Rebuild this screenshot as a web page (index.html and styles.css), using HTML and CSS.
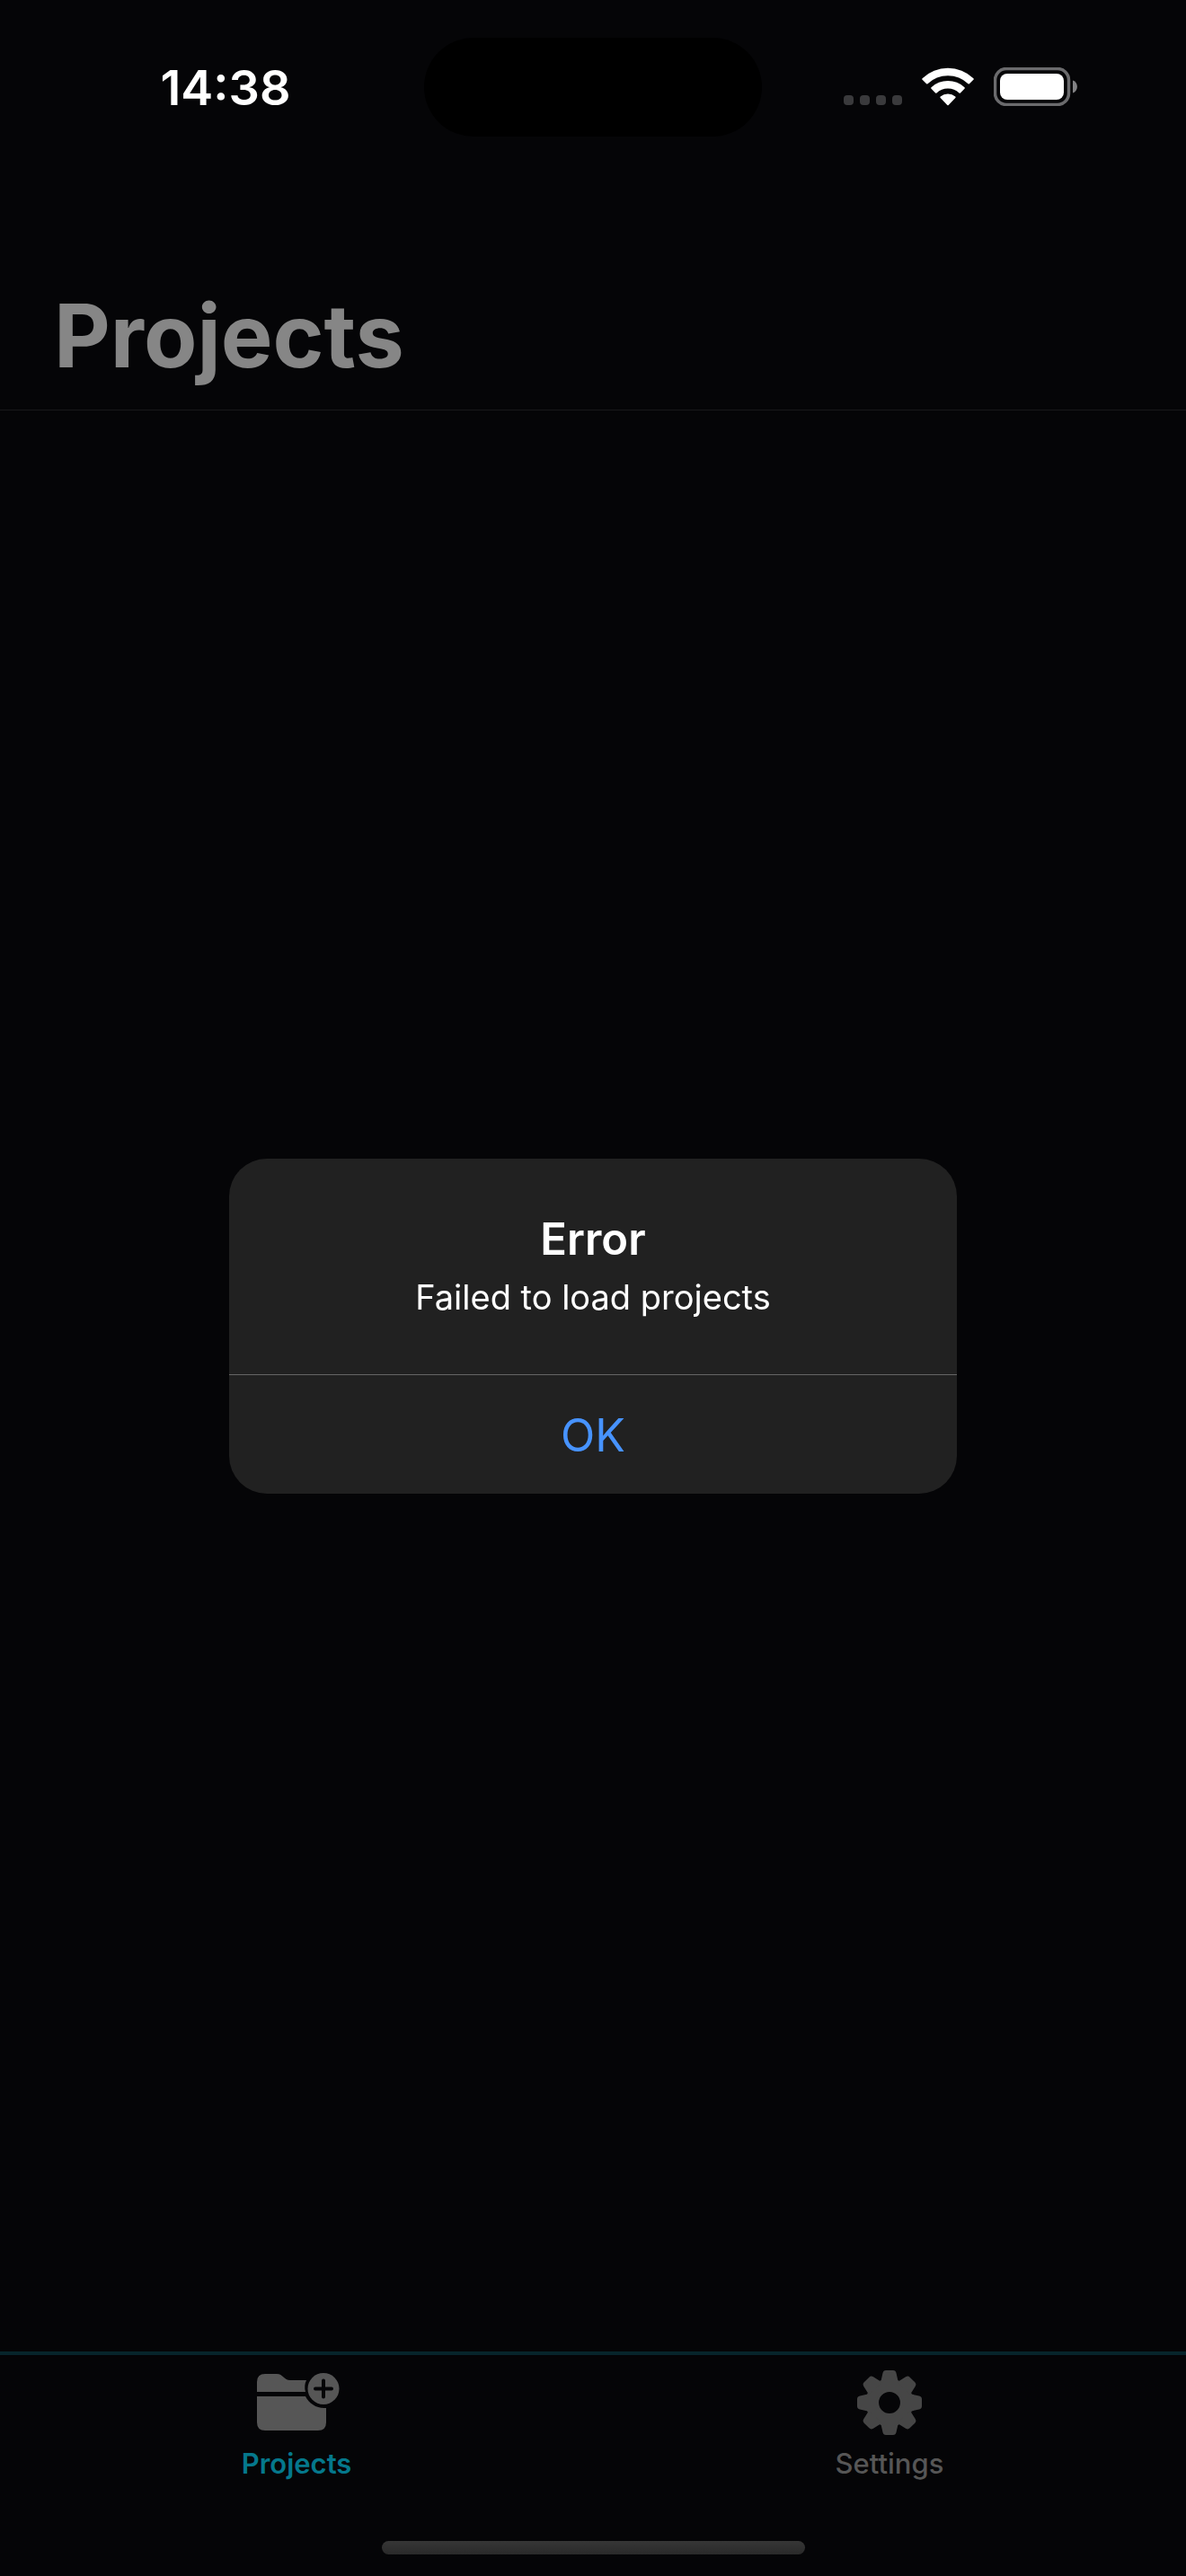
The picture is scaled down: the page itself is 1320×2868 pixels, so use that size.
FILE: index.html
```html
<!DOCTYPE html>
<html lang="en">
<head>
  <meta charset="utf-8">
  <meta name="viewport" content="width=device-width, initial-scale=1">
  <title>Projects</title>
  <link rel="stylesheet" href="styles.css">
</head>
<body>
  <div class="screen">
    <div class="status-bar">
      <time class="status-time">14:38</time>
      <span class="island"></span>
      <div class="status-icons">
        <svg class="icon-signal" viewBox="0 0 65 12" aria-hidden="true">
          <rect width="11" height="11" rx="4"/>
          <rect x="18" width="11" height="11" rx="4"/>
          <rect x="36" width="11" height="11" rx="4"/>
          <rect x="54" width="11" height="11" rx="4"/>
        </svg>
        <svg class="icon-wifi" viewBox="0 0 58 43" aria-hidden="true">
          <path d="M.6 12.2a1 1 0 0 0 0 1.500l4.500 4.500a1 1 0 0 0 1.400 0a32.500 32.500 0 0 1 45 0a1 1 0 0 0 1.400 0l4.500-4.500a1 1 0 0 0 0-1.500a41.200 41.200 0 0 0-56.800 0z"/>
          <path d="M10.500 22.300a1 1 0 0 0 0 1.500l4.600 4.600a1 1 0 0 0 1.400 0a18.500 18.500 0 0 1 25 0a1 1 0 0 0 1.400 0l4.600-4.600a1 1 0 0 0 0-1.500a27 27 0 0 0-37 0z"/>
          <path d="M20.700 32.600a1 1 0 0 0 0 1.500l7.600 7.900a1 1 0 0 0 1.400 0l7.600-7.900a1 1 0 0 0 0-1.500a13 13 0 0 0-16.600 0z"/>
        </svg>
        <svg class="icon-battery" viewBox="0 0 93 43" aria-hidden="true">
          <rect x="1.500" y="1.500" width="82" height="40" rx="12.500" fill="none" stroke="#6b6b6d" stroke-width="3.500"/>
          <rect x="7" y="7" width="71" height="29" rx="8" fill="#fff"/>
          <path d="M88 14.500c6.500 2 6.500 12 0 14z" fill="#828284"/>
        </svg>
      </div>
    </div>

    <header class="page-header">
      <h1 class="page-title">Projects</h1>
    </header>

    <main class="content"></main>

    <nav class="tab-bar">
      <div class="tabs">
        <a class="tab tab-active" href="#projects">
          <svg class="tab-icon" viewBox="0 0 96 72" aria-hidden="true">
            <path d="M4 24V13q0-9 9-9h13c7 0 8 7 15 7h18q-3 6-1 13z"/>
            <path d="M4 29h54c4 8 13 14 23 13v16q0 9-9 9H13q-9 0-9-9z"/>
            <circle cx="78" cy="20.500" r="17.500"/>
            <path class="plus" d="M69 20.500h18M78 11.500v18"/>
          </svg>
          <span>Projects</span>
        </a>
        <a class="tab" href="#settings">
          <svg class="tab-icon" viewBox="-48 -36 96 72" aria-hidden="true">
            <defs>
              <path id="tooth" d="M-10-22-7.500-33q.6-3 3.500-3h8q2.900 0 3.500 3L10-22z"/>
            </defs>
            <circle r="19.200" fill="none" stroke="currentColor" stroke-width="14.500"/>
            <use href="#tooth"/>
            <use href="#tooth" transform="rotate(45)"/>
            <use href="#tooth" transform="rotate(90)"/>
            <use href="#tooth" transform="rotate(135)"/>
            <use href="#tooth" transform="rotate(180)"/>
            <use href="#tooth" transform="rotate(225)"/>
            <use href="#tooth" transform="rotate(270)"/>
            <use href="#tooth" transform="rotate(315)"/>
          </svg>
          <span>Settings</span>
        </a>
      </div>
      <span class="home-indicator"></span>
    </nav>
  </div>

  <div class="overlay">
    <section class="alert" role="alertdialog" aria-labelledby="alert-title" aria-describedby="alert-text">
      <div class="alert-body">
        <h2 class="alert-title" id="alert-title">Error</h2>
        <p class="alert-text" id="alert-text">Failed to load projects</p>
      </div>
      <button class="alert-button" type="button">OK</button>
    </section>
  </div>
</body>
</html>
```

FILE: styles.css
```css
* {
  box-sizing: border-box;
}

body {
  margin: 0;
  background: #050507;
  color: #fff;
  font-family: Inter, "Liberation Sans", sans-serif;
}

h1,
h2,
p {
  margin: 0;
}

.screen {
  display: flex;
  flex-direction: column;
  min-height: 100vh;
}

/* Status bar */
.status-bar {
  display: grid;
  grid-template-columns: 1fr auto 1fr;
  align-items: center;
  padding: 42px 0 24px;
}

.status-time {
  padding: 2px 0 0 30px;
  font-size: 54px;
  line-height: 64px;
  font-weight: 600;
  text-align: center;
}

.island {
  width: 376px;
  height: 110px;
  border-radius: 55px;
  background: #000;
}

.status-icons {
  display: flex;
  justify-content: flex-end;
  align-items: flex-end;
  gap: 22px;
  padding: 0 121px 2px 0;
}

.status-icons svg {
  display: block;
  height: 43px;
}

.status-icons .icon-signal {
  width: 65px;
  height: 12px;
  fill: #3a3a3c;
}

.icon-wifi {
  width: 58px;
  fill: #fff;
}

.icon-battery {
  width: 93px;
}

/* Header */
.page-header {
  padding: 136px 60px 20px;
  border-bottom: 1px solid #19191b;
}

.page-title {
  color: #868686;
  font-size: 97px;
  line-height: 124px;
  font-weight: 700;
}

.content {
  flex: 1;
}

/* Tab bar */
.tab-bar {
  display: flex;
  flex-direction: column;
  align-items: center;
  gap: 68px;
  padding: 17px 0 24px;
  border-top: 4px solid #07252b;
}

.tabs {
  display: grid;
  grid-template-columns: 1fr 1fr;
  width: 100%;
}

.tab {
  display: flex;
  flex-direction: column;
  align-items: center;
  gap: 14px;
  color: #464646;
  font-size: 31px;
  line-height: 36px;
  font-weight: 500;
  text-decoration: none;
}

.tab span {
  color: #565656;
}

.tab-active {
  color: #565656;
  font-weight: 600;
}

.tab-active span {
  color: #05788c;
}

.tab-icon {
  width: 96px;
  height: 72px;
  fill: currentColor;
}

.plus {
  fill: none;
  stroke: #050507;
  stroke-width: 4;
  stroke-linecap: round;
}

.home-indicator {
  width: 471px;
  height: 15px;
  border-radius: 8px;
  background: linear-gradient(#363636, #2a2a2a);
}

/* Alert */
.overlay {
  position: fixed;
  inset: 0;
  display: grid;
  place-items: center;
  padding-top: 85px;
}

.alert {
  width: 810px;
  max-width: 90%;
  border-radius: 42px;
  overflow: hidden;
  background: #212121;
  text-align: center;
}

.alert-body {
  padding: 60px 48px 62px;
}

.alert-title {
  font-size: 49px;
  line-height: 60px;
  font-weight: 600;
}

.alert-text {
  padding-top: 10px;
  font-size: 38px;
  line-height: 48px;
}

.alert-button {
  display: block;
  width: 100%;
  height: 133px;
  padding: 2px 0 0;
  border: 0;
  border-top: 1px solid #656565;
  background: none;
  color: #4793ff;
  font: inherit;
  font-size: 50px;
  cursor: pointer;
}
```
